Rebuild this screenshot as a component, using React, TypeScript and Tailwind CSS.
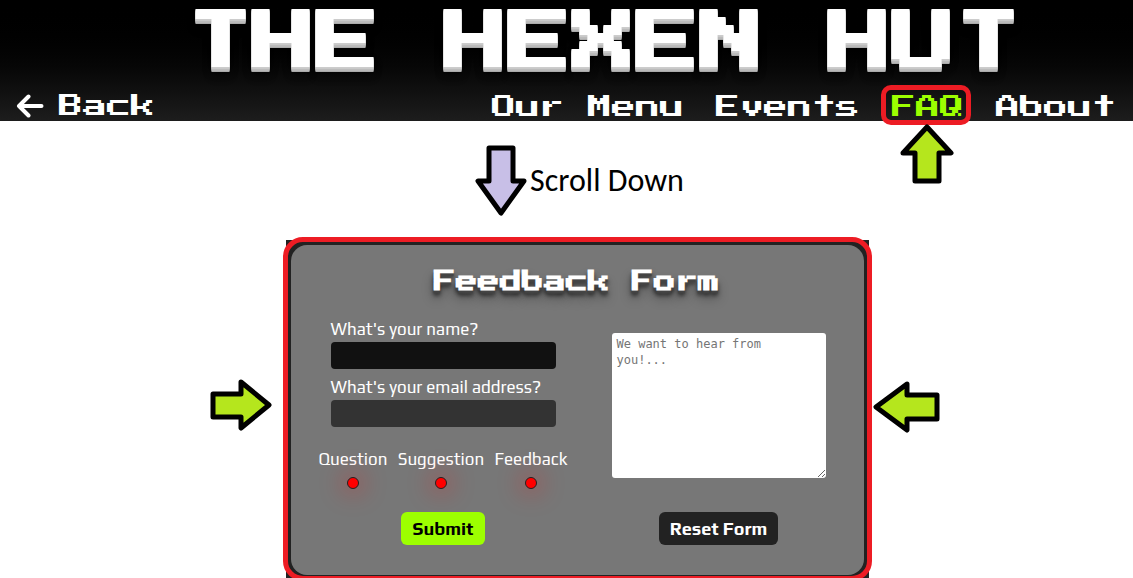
import React from "react";

const pixel = "font-['Press_Start_2P','Liberation_Mono',monospace]";

type ArrowProps = { points: string; className: string; fill: string; viewBox: string };

function BlockArrow({ points, className, fill, viewBox }: ArrowProps) {
  return (
    <svg aria-hidden="true" className={className} viewBox={viewBox}>
      <polygon points={points} fill={fill} stroke="#000" strokeWidth="5" strokeLinejoin="round" />
    </svg>
  );
}

function Header() {
  const link = "text-white no-underline";
  return (
    <header className="bg-linear-to-b from-black to-[#1d1d1d] text-white">
      <h1
        className={`${pixel} h-[84px] whitespace-nowrap pl-[76px] text-center text-[64px] font-bold leading-[84px] [text-shadow:0_1px_0_#ccc,0_2px_0_#c9c9c9,0_3px_0_#bbb,0_4px_0_#b9b9b9,0_5px_0_#aaa,0_6px_1px_rgba(0,0,0,.1),0_0_5px_rgba(0,0,0,.1),0_5px_10px_rgba(0,0,0,.25),0_10px_10px_rgba(0,0,0,.2)]`}
      >
        THE HEXEN HUT
      </h1>
      <nav className={`${pixel} flex h-[37px] items-center justify-between pt-[9px] pr-[17px] pl-4 text-[24px] leading-[28px]`}>
        <a href="#back" className="flex items-center gap-[15px] pb-[3px] text-white">
          <svg aria-hidden="true" className="h-6 w-7" viewBox="0 0 28 24" fill="none" stroke="white" strokeWidth="4" strokeLinecap="round" strokeLinejoin="round">
            <path d="M12.500 2.500L3 12l9.500 9.500M3 12h22.500" />
          </svg>
          Back
        </a>
        <div className="flex gap-8">
          <a href="#menu" className={link}>Our Menu</a>
          <a href="#events" className={link}>Events</a>
          <a href="#faq" className="relative text-[#9dff00]">
            FAQ
            <span className="absolute -top-2 -right-[7px] -left-[11px] h-[40px] rounded-[10px] border-5 border-[#ed1c24]" />
            <BlockArrow
              className="absolute top-[30px] left-2 h-[62px] w-[54px]"
              viewBox="0 0 54 62"
              fill="#b5e61d"
              points="27,4 51,30 39,30 39,58 15,58 15,30 3,30"
            />
          </a>
          <a href="#about" className={link}>About</a>
        </div>
      </nav>
    </header>
  );
}

function TextField({ id, label, className }: { id: string; label: string; className: string }) {
  return (
    <div className="flex flex-col gap-[3px] px-3">
      <label htmlFor={id} className="leading-5">{label}</label>
      <input id={id} type="text" className={`h-[27px] w-full rounded-[4px] px-2 text-white outline-none ${className}`} />
    </div>
  );
}

function FeedbackForm() {
  return (
    <form className="rounded-2xl bg-[#777] pt-[21px] pb-[30px] font-['Play','Roboto',sans-serif] text-[17px] text-white">
      <h2 className={`${pixel} mb-[21px] text-center text-[22px] font-bold leading-8 [text-shadow:0_3px_1px_#444,0_5px_4px_rgba(0,0,0,.6),0_8px_12px_rgba(0,0,0,.3)]`}>
        Feedback Form
      </h2>
      <div className="flex justify-center gap-11 pr-2.5">
        <div className="flex w-[249px] flex-col">
          <TextField id="name" label="What's your name?" className="bg-[#111]" />
          <div className="h-2" />
          <TextField id="email" label="What's your email address?" className="bg-[#333]" />
          <div className="mt-[22px] flex justify-between">
            {["Question", "Suggestion", "Feedback"].map((kind) => (
              <label key={kind} className="flex flex-col items-center gap-2 leading-5">
                {kind}
                <input
                  type="radio"
                  name="kind"
                  value={kind}
                  className="size-3 appearance-none rounded-full border border-[#222] bg-[#f00] shadow-[0_0_24px_4px_rgba(255,0,0,.35)]"
                />
              </label>
            ))}
          </div>
          <button type="button" className="mt-[23px] h-[33px] w-[84px] self-center rounded-md bg-[#9dff00] text-[18px] font-bold text-black">
            Submit
          </button>
        </div>
        <div className="flex w-[214px] flex-col items-center justify-between pt-3.5">
          <textarea
            aria-label="Your message"
            placeholder="We want to hear from you!..."
            className="h-[145px] w-full rounded-[3px] bg-white py-[3px] pr-8 pl-[5px] font-['DejaVu_Sans_Mono',monospace] text-[12px] leading-4 text-black outline-none placeholder:text-[#757575]"
          />
          <button type="reset" className="h-[33px] w-[119px] rounded-md bg-[#222] text-[18px] font-bold text-white">
            Reset Form
          </button>
        </div>
      </div>
    </form>
  );
}

export default function App() {
  return (
    <div className="h-screen overflow-hidden bg-white">
      <Header />
      <main>
        <div className="flex items-center justify-center gap-[3px] pt-6 pl-[26px]">
          <BlockArrow
            className="h-[72px] w-[52px]"
            viewBox="0 0 52 72"
            fill="#c8bfe7"
            points="14,3 38,3 38,36 49,36 26,68 3,36 14,36"
          />
          <p className="pb-px font-['Carlito','Calibri','Open_Sans',sans-serif] text-[32px] leading-9 text-black">Scroll Down</p>
        </div>
        <div className="mt-5 flex items-center justify-center pl-4">
          <BlockArrow
            className="mr-2.5 mb-2 h-[52px] w-[63px] shrink-0"
            viewBox="0 0 63 52"
            fill="#b5e61d"
            points="3,15 31,15 31,3 59,26 31,49 31,38 3,38"
          />
          <section className="relative z-0 w-[589px]">
            <div className="absolute inset-[3px] -z-10 bg-[#222]" />
            <div className="rounded-[20px] border-5 border-[#ed1c24] bg-[#222] p-[3px] pb-px">
              <FeedbackForm />
            </div>
          </section>
          <BlockArrow
            className="mb-1 h-[52px] w-[68px] shrink-0"
            viewBox="0 0 68 52"
            fill="#b5e61d"
            points="65,14 35,14 35,3 4,26 35,49 35,38 65,38"
          />
        </div>
      </main>
    </div>
  );
}
